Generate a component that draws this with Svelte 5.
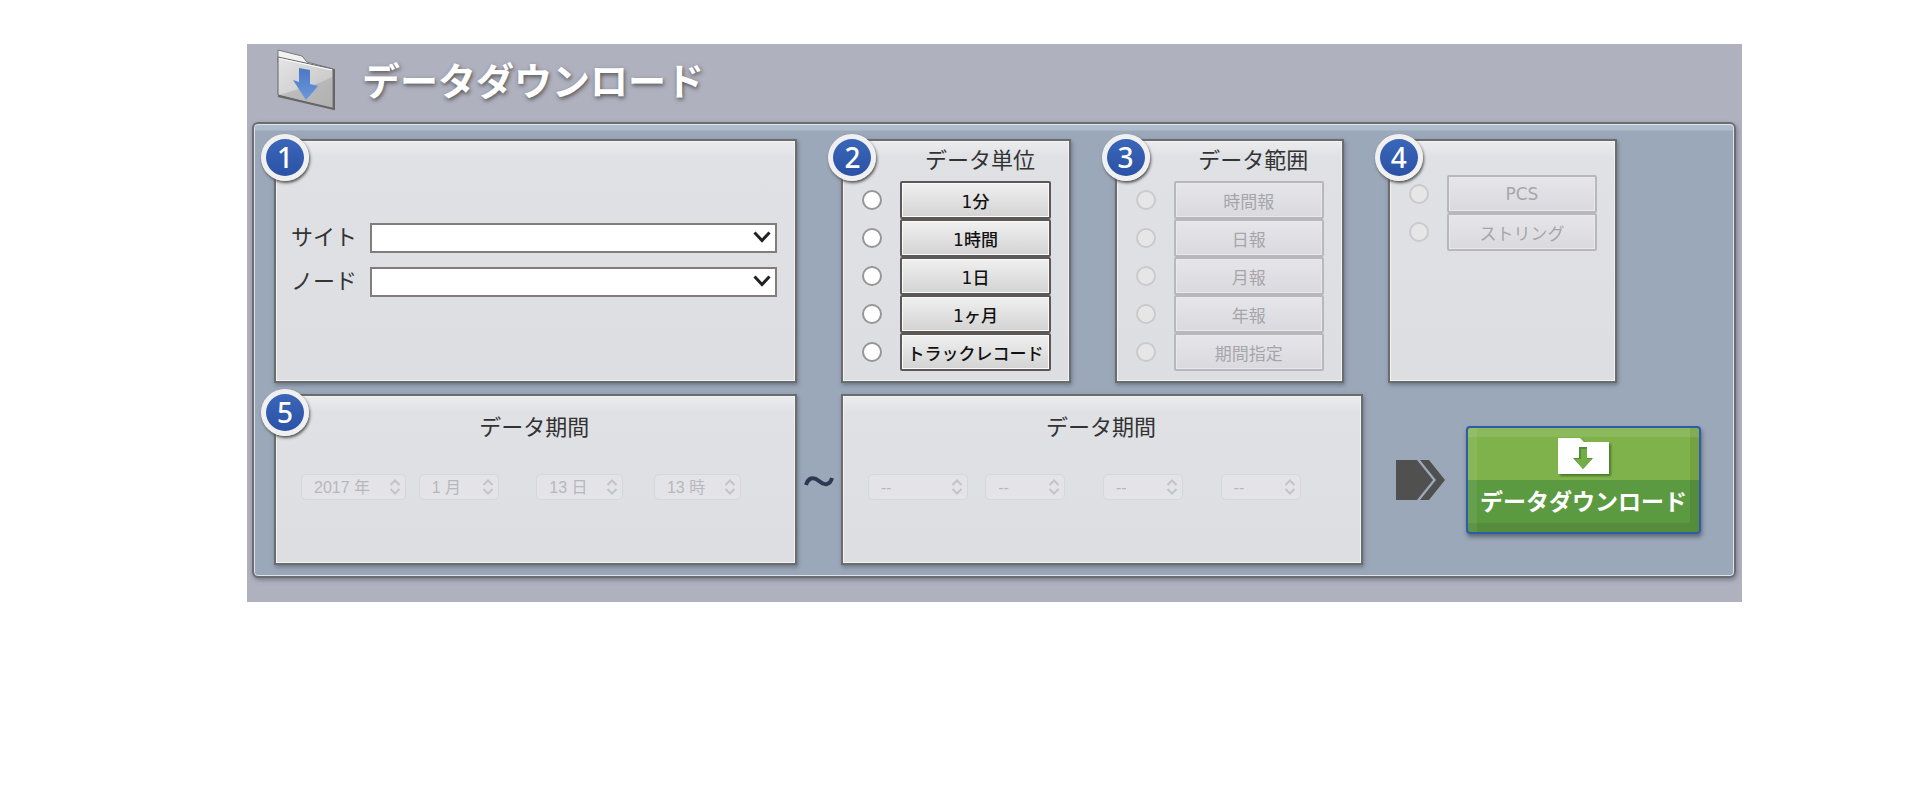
<script lang="ts">
    type Choice = {
        no: number
        name: string
        title: string
        disabled: boolean
        items: string[]
    }

    const choices: Choice[] = [
        {
            no: 2,
            name: 'unit',
            title: 'データ単位',
            disabled: false,
            items: ['1分', '1時間', '1日', '1ヶ月', 'トラックレコード'],
        },
        {
            no: 3,
            name: 'range',
            title: 'データ範囲',
            disabled: true,
            items: ['時間報', '日報', '月報', '年報', '期間指定'],
        },
        { no: 4, name: 'target', title: '', disabled: true, items: ['PCS', 'ストリング'] },
    ]

    const periods = [
        { no: 5, name: 'from', values: ['2017 年', '1 月', '13 日', '13 時'] },
        { no: 0, name: 'to', values: ['--', '--', '--', '--'] },
    ]

    const parts = ['年', '月', '日', '時']

    let selected: Record<string, string> = $state({ unit: '', range: '', target: '' })
</script>

{#snippet badge(no: number)}
    <span class="badge">{no}</span>
{/snippet}

{#snippet period(p: { no: number; name: string; values: string[] })}
    <section class="card period">
        {#if p.no}
            {@render badge(p.no)}
        {/if}
        <h2>データ期間</h2>
        <div class="dates">
            {#each p.values as value, i}
                <div class="date {p.name}">
                    <select disabled aria-label="{p.name} {parts[i]}">
                        <option>{value}</option>
                    </select>
                    <svg viewBox="0 0 12 16" aria-hidden="true">
                        <path d="M1.5 6 6 1.5 10.5 6M1.5 10 6 14.5 10.5 10" />
                    </svg>
                </div>
            {/each}
        </div>
    </section>
{/snippet}

<main>
    <header>
        <svg class="folder" viewBox="0 0 60 62" aria-hidden="true">
            <defs>
                <linearGradient id="front" x1="0" y1="0" x2="1" y2="1">
                    <stop offset="0" stop-color="#e4e4e4" />
                    <stop offset="1" stop-color="#c0c0c0" />
                </linearGradient>
                <linearGradient id="arrow" x1="0" y1="0" x2="0" y2="1">
                    <stop offset="0" stop-color="#4a78c4" />
                    <stop offset="1" stop-color="#6a97dc" />
                </linearGradient>
            </defs>
            <path d="M2 1 26 7 31 13 57 20 57 28 2 14Z" fill="#f2f2f2" stroke="#777" />
            <path d="M2 8 57 20V60L2 46Z" fill="url(#front)" stroke="#666" />
            <path d="M3 46C22 40 42 36 56 28V59Z" fill="#999" opacity="0.4" />
            <path d="M3 9.5 56 21" stroke="#fff" fill="none" />
            <path d="M58 20V60L2 47" stroke="#666" fill="none" stroke-width="2" />
            <path d="M23 19 34 21V35L42 37 30 51 17 31 23 33Z" fill="url(#arrow)" />
        </svg>
        <h1>データダウンロード</h1>
    </header>

    <div class="panel">
        <div class="top">
            <section class="card place">
                {@render badge(1)}
                <label for="site">サイト</label>
                <div class="field">
                    <select id="site"><option></option></select>
                    <svg viewBox="0 0 18 12" aria-hidden="true"><path d="M1.5 1.5 9 9.5 16.5 1.5" /></svg>
                </div>
                <label for="node">ノード</label>
                <div class="field">
                    <select id="node"><option></option></select>
                    <svg viewBox="0 0 18 12" aria-hidden="true"><path d="M1.5 1.5 9 9.5 16.5 1.5" /></svg>
                </div>
            </section>

            {#each choices as choice}
                <section class="card choice" class:untitled={!choice.title}>
                    {@render badge(choice.no)}
                    {#if choice.title}
                        <h2>{choice.title}</h2>
                    {/if}
                    {#each choice.items as item, i}
                        <div class="item">
                            <input
                                type="radio"
                                name={choice.name}
                                value={item}
                                disabled={choice.disabled}
                                aria-labelledby="{choice.name}-{i}"
                                bind:group={selected[choice.name]}
                            />
                            <button
                                type="button"
                                id="{choice.name}-{i}"
                                disabled={choice.disabled}
                                onclick={() => (selected[choice.name] = item)}>{item}</button
                            >
                        </div>
                    {/each}
                </section>
            {/each}
        </div>

        <div class="bottom">
            {@render period(periods[0])}
            <svg class="tilde" viewBox="0 0 32 20" aria-hidden="true">
                <path d="M3 15C5 8 10 6 16 11S27 15 29 8" />
            </svg>
            {@render period(periods[1])}
            <div class="action">
                <svg class="next" viewBox="0 0 49 40" aria-hidden="true">
                    <path d="M0 0H21L37 20 21 40H0Z" />
                    <path d="M24 0H33L49 20 33 40H24L40 20Z" />
                </svg>
                <button type="button" class="download">
                    <svg viewBox="0 0 51 37" aria-hidden="true">
                        <path d="M0 0H22L26 4H51V36H0Z" fill="#fff" />
                        <path d="M21 9H29V20H35L25 31 15 20H21Z" fill="#4f8f3a" />
                        <path d="M23 11H29V21H34L25 31 17 21H23Z" fill="#74ad45" />
                    </svg>
                    <span>データダウンロード</span>
                </button>
            </div>
        </div>
    </div>
</main>

<style>
    :global(body) {
        background: #fff;
    }

    main {
        margin: 44px 178px 0 247px;
        padding: 0 6px 24px 5px;

        background: #afb1bf;
        color: #333;
        font-family: 'DejaVu Sans', 'Noto Sans CJK JP', sans-serif;
    }

    main * {
        box-sizing: border-box;
    }

    header {
        display: flex;
        align-items: center;
        gap: 26px;

        height: 78px;
        padding: 0 0 6px 24px;
    }

    .folder {
        width: 60px;
        height: 62px;
    }

    h1 {
        margin: 0;
        padding-top: 3px;

        color: #fff;
        font-size: 38px;
        font-weight: 700;
        line-height: 56px;
        text-shadow: 1px 2px 4px #555;
    }

    h2 {
        margin: 0;

        font-size: 22px;
        font-weight: 400;
        line-height: 40px;
        text-align: center;
    }

    .panel {
        padding: 15px 0 11px 20px;

        background: linear-gradient(#afbccb 6px, #9ba8b9 7px);
        border: 2px solid #6b6d72;
        border-radius: 6px;
        box-shadow: inset 0 0 0 1px #dde3ea, 1px 2px 4px #777b88;
    }

    .top {
        display: grid;
        grid-template-columns: 523fr 229fr 229fr 229fr;
        gap: 44px;

        padding-right: 117px;
    }

    .bottom {
        display: grid;
        grid-template-columns: 523fr 44px 523fr 371fr;
        align-items: center;

        margin-top: 11px;
    }

    .card {
        position: relative;

        background: linear-gradient(#ececee, #e0e1e5 16px, #dddee2);
        border: 2px solid #6a6c6e;
        box-shadow: inset 0 0 0 1px #f3f3f3, 1px 2px 4px #6d7886;
    }

    .badge {
        position: absolute;
        top: -7px;
        left: -15px;

        width: 48px;
        height: 47px;

        background: linear-gradient(#3a66b8, #2b52a6);
        border: 5px solid #f0f0f0;
        border-radius: 50%;
        box-shadow: 1px 2px 3px #555;
        color: #fff;
        font-family: 'Noto Sans', sans-serif;
        font-size: 28px;
        font-weight: 500;
        line-height: 37px;
        text-align: center;
    }

    .place {
        display: grid;
        grid-template-columns: 65px 1fr;
        align-content: center;
        align-items: center;
        gap: 14px;

        min-height: 244px;
        padding: 0 18px 2px 15px;

        font-size: 22px;
    }

    .place label {
        line-height: 30px;
        white-space: nowrap;
    }

    .field {
        position: relative;
    }

    select {
        appearance: none;
        display: block;
        width: 100%;
        margin: 0;
    }

    .field select {
        height: 30px;

        background: #fff;
        border: 2px solid #827d7b;
        border-radius: 0;
        font-size: 18px;
    }

    .field svg {
        position: absolute;
        top: 8px;
        right: 6px;

        width: 18px;
        height: 12px;

        fill: none;
        stroke: #222;
        stroke-width: 3;
        pointer-events: none;
    }

    .choice {
        padding: 0 18px 8px 19px;
    }

    .choice h2 {
        padding-left: 47px;

        white-space: nowrap;
    }

    .untitled {
        padding-top: 34px;
    }

    .item {
        display: flex;
        align-items: center;
        gap: 18px;
    }

    input {
        appearance: none;
        flex: none;

        width: 20px;
        height: 20px;
        margin: 0;

        background: #fff;
        border: 2px solid #969696;
        border-radius: 50%;
    }

    input:checked {
        background: radial-gradient(#333 4px, #fff 5px);
    }

    input:disabled {
        background: #e6e6e6;
        border-color: #cacacc;
    }

    .item button {
        flex: 1;

        height: 38px;
        padding: 0;

        background: linear-gradient(#f0f0f0, #d3d3d3);
        border: 2px solid #5c5857;
        border-radius: 2px;
        box-shadow: inset 0 0 0 1px #fafafa;
        color: #111;
        font-family: inherit;
        font-size: 17px;
        font-weight: 500;
        white-space: nowrap;
    }

    .item button:disabled {
        background: linear-gradient(#e6e6ea, #dadade);
        border-color: #b8b8bc;
        box-shadow: inset 0 0 0 1px #e8e8eb;
        color: #a6a6aa;
        font-weight: 400;
    }

    .period {
        min-height: 171px;
        padding: 12px 23px 0 25px;
    }

    .period h2 {
        padding-right: 4px;
    }

    .dates {
        display: grid;
        grid-template-columns: repeat(4, 1fr);

        margin-top: 26px;
    }

    .date {
        position: relative;

        width: 80px;
    }

    .date:first-child {
        width: 100px;
    }

    .date.from:first-child {
        width: 105px;
    }

    .date.from:nth-child(n + 3) {
        width: 87px;
    }

    .date select {
        height: 26px;
        padding: 0 0 0 12px;

        background: #e4e4e8;
        border: 1px solid #d6d7dc;
        border-radius: 5px;
        color: #b6b7bc;
        font-family: 'Liberation Sans', 'Noto Sans CJK JP', sans-serif;
        font-size: 16px;
        opacity: 1;
    }

    .date svg {
        position: absolute;
        top: 5px;
        right: 5px;

        width: 12px;
        height: 16px;

        fill: none;
        stroke: #c3c4c8;
        stroke-width: 2;
        pointer-events: none;
    }

    .tilde {
        justify-self: center;

        width: 32px;
        height: 20px;

        fill: none;
        stroke: #2f3853;
        stroke-width: 4;
    }

    .action {
        display: flex;
        align-items: center;
        justify-content: flex-end;
        gap: 21px;

        padding-right: 33px;
    }

    .next {
        width: 49px;
        height: 40px;

        fill: #505050;
    }

    .download {
        display: flex;
        flex-direction: column;
        align-items: center;
        gap: 10px;

        width: 235px;
        height: 108px;
        padding: 10px 0 0;

        background: linear-gradient(#7fb24a 52px, #5c9a42 52px);
        border: 2px solid #2f5ca8;
        border-radius: 4px;
        box-shadow:
            inset 0 9px 0 #ffffff1a,
            inset 9px 0 0 #ffffff11,
            inset -9px -9px 0 #00000016,
            1px 3px 4px #5d6876;
        color: #fff;
        font-family: inherit;
        font-size: 23px;
        font-weight: 700;
        line-height: 34px;
    }

    .download svg {
        width: 51px;
        height: 37px;

        filter: drop-shadow(2px 2px 1px #4a7a2c);
    }
</style>
